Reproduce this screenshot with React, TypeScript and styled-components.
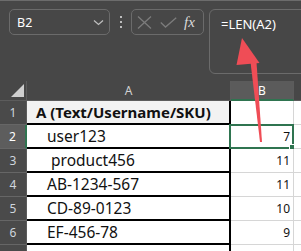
import React from 'react';
import styled, { createGlobalStyle } from 'styled-components';

const GREEN = '#2f7450';

const Global = createGlobalStyle`
  html, body { margin: 0; padding: 0; background: #474747; }
  body { width: 301px; height: 251px; overflow: hidden; font-family: "Noto Sans", "Open Sans", sans-serif; }
`;

const Page = styled.div`
  position: relative;
  width: 301px;
  height: 251px;
  overflow: hidden;
  background: #474747;
  border-top: 1px solid #6c6c6c;
  box-sizing: border-box;
`;

const Toolbar = styled.div`
  display: flex;
  align-items: flex-start;
  height: 80px;
  padding: 8px 0 0 9px;
  box-sizing: border-box;
`;

const NameBox = styled.div`
  width: 101px;
  height: 26px;
  box-sizing: border-box;
  border: 1px solid #6b6b6b;
  border-radius: 5px;
  display: flex;
  align-items: center;
  justify-content: space-between;
  padding: 0 5px 0 7px;
  color: #ffffff;
  font-size: 12.5px;
  flex-shrink: 0;
`;

const Dots = styled.div`
  width: 21px;
  height: 26px;
  display: flex;
  flex-direction: column;
  align-items: center;
  justify-content: center;
  gap: 3px;
  flex-shrink: 0;
`;

const Dot = styled.span`
  width: 2px;
  height: 2px;
  background: #bdbdbd;
`;

const FxGroup = styled.div`
  width: 73px;
  height: 26px;
  box-sizing: border-box;
  border: 1px solid #6b6b6b;
  border-radius: 5px;
  display: flex;
  align-items: center;
  padding-left: 5px;
  gap: 8px;
  flex-shrink: 0;
`;

const Fx = styled.span`
  font-family: "Liberation Serif", "DejaVu Serif", serif;
  font-style: italic;
  font-size: 15px;
  color: #dadada;
  margin-left: -1px;
`;

const FormulaBox = styled.div`
  margin-left: 5px;
  width: 160px;
  height: 65px;
  box-sizing: border-box;
  border: 1px solid #6b6b6b;
  border-radius: 6px;
  padding: 5px 11px;
  color: #ffffff;
  font-size: 13px;
  flex-shrink: 0;
`;

const Sheet = styled.div`
  display: grid;
  grid-template-columns: 27px 204px 63px 40px;
  grid-template-rows: 20px repeat(7, 24px);
`;

const Corner = styled.div`
  position: relative;
  box-sizing: border-box;
  border-right: 1px solid #5c5c5c;
  border-bottom: 1px solid #5c5c5c;
  &::after {
    content: '';
    position: absolute;
    right: 2px;
    bottom: 3px;
    width: 0;
    height: 0;
    border-left: 13px solid transparent;
    border-bottom: 13px solid #cfcfcf;
  }
`;

const ColHead = styled.div<{ $selected?: boolean }>`
  box-sizing: border-box;
  display: flex;
  align-items: center;
  justify-content: center;
  font-size: 12px;
  color: ${p => (p.$selected ? '#ffffff' : '#d2d2d2')};
  background: ${p => (p.$selected ? '#5b5b5b' : '#474747')};
  border-right: 1px solid #5c5c5c;
  border-bottom: ${p => (p.$selected ? `2px solid ${GREEN}` : '1px solid #5c5c5c')};
`;

const RowHead = styled.div<{ $selected?: boolean }>`
  box-sizing: border-box;
  display: flex;
  align-items: center;
  justify-content: center;
  font-size: 12px;
  color: ${p => (p.$selected ? '#ffffff' : '#cfd6de')};
  background: ${p => (p.$selected ? '#5d5d5d' : '#4a4a4a')};
  border-bottom: 1px solid #666666;
  border-right: ${p => (p.$selected ? `2px solid ${GREEN}` : '1px solid #5c5c5c')};
`;

const CellA = styled.div<{ $head?: boolean }>`
  box-sizing: border-box;
  display: flex;
  align-items: center;
  white-space: pre;
  background: ${p => (p.$head ? '#f2f2f2' : '#ffffff')};
  border-right: 2px solid #000000;
  border-bottom: 2px solid #000000;
  padding-left: ${p => (p.$head ? '9px' : '20px')};
  font-size: ${p => (p.$head ? '15px' : '15.5px')};
  font-weight: ${p => (p.$head ? 700 : 400)};
  color: #111111;
`;

const CellB = styled.div`
  position: relative;
  box-sizing: border-box;
  display: flex;
  align-items: flex-end;
  justify-content: flex-end;
  padding: 0 3px 3px 0;
  background: #ffffff;
  border-right: 1px solid #d6d6d6;
  border-bottom: 1px solid #d6d6d6;
  font-size: 12px;
  color: #111111;
`;

const Selection = styled.div`
  position: absolute;
  left: -2px;
  top: -1px;
  right: -1px;
  bottom: -1px;
  border: 2px solid ${GREEN};
  pointer-events: none;
  &::after {
    content: '';
    position: absolute;
    right: -4px;
    bottom: -4px;
    width: 5px;
    height: 5px;
    background: ${GREEN};
    border: 1px solid #ffffff;
  }
`;

const Overlay = styled.svg`
  position: absolute;
  left: 0;
  top: 0;
  pointer-events: none;
`;

const rows: { a: string; b: string }[] = [
  { a: 'A (Text/Username/SKU)', b: '' },
  { a: 'user123', b: '7' },
  { a: ' product456', b: '11' },
  { a: 'AB-1234-567', b: '11' },
  { a: 'CD-89-0123', b: '10' },
  { a: 'EF-456-78', b: '9' },
  { a: '', b: '' },
];

export default function App() {
  return (
    <>
      <Global />
      <Page>
        <Toolbar>
          <NameBox>
            <span>B2</span>
            <svg width="11" height="7" viewBox="0 0 11 7">
              <path d="M1 1.5 L5.5 5.5 L10 1.5" fill="none" stroke="#bdbdbd" strokeWidth="1.3" />
            </svg>
          </NameBox>
          <Dots>
            <Dot />
            <Dot />
            <Dot />
          </Dots>
          <FxGroup>
            <svg width="15" height="13" viewBox="0 0 15 13">
              <path d="M1 0.5 L14 12.5 M14 0.5 L1 12.5" stroke="#7c7c7c" strokeWidth="1.3" fill="none" />
            </svg>
            <svg width="17" height="11" viewBox="0 0 17 11">
              <path d="M0.8 5.5 L5.5 10 L16.2 0.8" stroke="#7c7c7c" strokeWidth="1.3" fill="none" />
            </svg>
            <Fx>fx</Fx>
          </FxGroup>
          <FormulaBox>=LEN(A2)</FormulaBox>
        </Toolbar>
        <Sheet>
          <Corner />
          <ColHead>A</ColHead>
          <ColHead $selected>B</ColHead>
          <ColHead />
          {rows.map((r, i) => (
            <React.Fragment key={i}>
              <RowHead $selected={i === 1}>{i < 6 ? i + 1 : ''}</RowHead>
              <CellA $head={i === 0}>{r.a}</CellA>
              <CellB>
                {r.b}
                {i === 1 && <Selection />}
              </CellB>
              <CellB />
            </React.Fragment>
          ))}
        </Sheet>
        <Overlay width="301" height="251" viewBox="0 0 301 251">
          <polygon points="242,37 236.5,64 259.5,62" fill="#ef4d56" />
          <polygon points="250.5,61 256.5,61 262,141 260,141" fill="#ef4d56" />
        </Overlay>
      </Page>
    </>
  );
}
